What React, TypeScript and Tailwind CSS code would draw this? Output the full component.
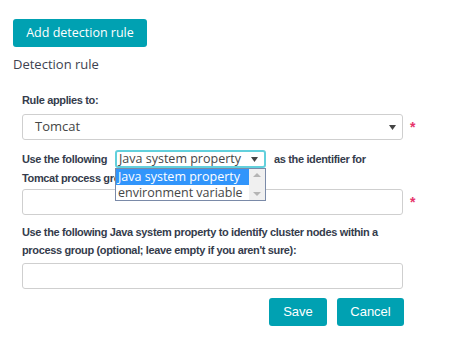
import React from "react";

const Star = () => (
  <span className="ml-[7px] text-[14px] leading-none text-[#e6336b] font-['Liberation_Sans',sans-serif] font-bold">*</span>
);

const Caret = () => (
  <svg width="7" height="5" viewBox="0 0 7 5" className="shrink-0">
    <path d="M0 0 H7 L3.5 5 Z" fill="#444" />
  </svg>
);

export default function App() {
  return (
    <div className="relative w-[466px] h-[344px] bg-white font-['Open_Sans',sans-serif] text-[#454646] overflow-hidden">
      <div className="pl-[13px] pt-[19px]">
        <button className="h-[28px] w-[134px] rounded-[3px] bg-[#00a1b2] text-white text-[12.5px] flex items-center justify-center">
          Add detection rule
        </button>
        <div className="mt-[8px] text-[13px] leading-[18px] text-[#3d4250]">Detection rule</div>

        <div className="ml-[9px] w-[395px] font-['Liberation_Sans',sans-serif] text-[11px] font-bold text-[#353c4c] tracking-[-0.35px]">
          <div className="mt-[18px] leading-[18px]">Rule applies to:</div>

          <div className="mt-[5px] flex items-center">
            <div className="w-[381px] h-[26px] border border-[#cfcfcf] rounded-[3px] flex items-center justify-between pl-[12px] pr-[6px] font-['Open_Sans',sans-serif] font-normal tracking-normal text-[13px] text-[#454646]">
              <span>Tomcat</span>
              <Caret />
            </div>
            <Star />
          </div>

          <div className="relative mt-[10px]">
            <div className="flex items-center h-[18px]">
              <span className="w-[93px]">Use the following</span>
              <div className="w-[151px] h-[18px] border-2 border-[#62d0dc] rounded-[3px] flex items-center justify-between pl-[2px] pr-[6px] font-['Open_Sans',sans-serif] font-normal tracking-normal text-[12.5px] text-[#454646]">
                <span className="leading-none">Java system property</span>
                <Caret />
              </div>
              <span className="ml-[8px]">as the identifier for</span>
            </div>
            <div className="leading-[19px] mt-[1px]">Tomcat process group:</div>

            <div className="absolute left-[93px] top-[18px] w-[151px] h-[33px] border border-[#7a8aa8] bg-white flex font-['Open_Sans',sans-serif] font-normal tracking-normal text-[12.5px] z-10">
              <div className="flex-1 flex flex-col">
                <div className="h-[16px] bg-[#3195fb] text-white pl-[2px] leading-[16px]">Java system property</div>
                <div className="h-[15px] pl-[2px] leading-[15px] text-[#454646]">environment variable</div>
              </div>
              <div className="w-[16px] bg-[#f0f0f0] flex flex-col items-center justify-between py-[4px]">
                <svg width="8" height="4" viewBox="0 0 8 4"><path d="M0 4 L4 0 L8 4 Z" fill="#b5b5b5" /></svg>
                <svg width="8" height="4" viewBox="0 0 8 4"><path d="M0 0 L8 0 L4 4 Z" fill="#b5b5b5" /></svg>
              </div>
            </div>
          </div>

          <div className="mt-[1px] flex items-center">
            <div className="w-[381px] h-[26px] border border-[#cfcfcf] rounded-[3px]" />
            <Star />
          </div>

          <div className="mt-[8px] leading-[18px]">
            Use the following Java system property to identify cluster nodes within a process group (optional; leave empty if you aren't sure):
          </div>

          <div className="mt-[4px] w-[381px] h-[26px] border border-[#cfcfcf] rounded-[3px]" />

          <div className="mt-[9px] w-[382px] flex justify-end gap-[10px] font-normal tracking-normal text-[13px]">
            <button className="h-[28px] w-[58px] rounded-[3px] bg-[#00a1b2] text-white">Save</button>
            <button className="h-[28px] w-[67px] rounded-[3px] bg-[#00a1b2] text-white">Cancel</button>
          </div>
        </div>
      </div>
    </div>
  );
}
